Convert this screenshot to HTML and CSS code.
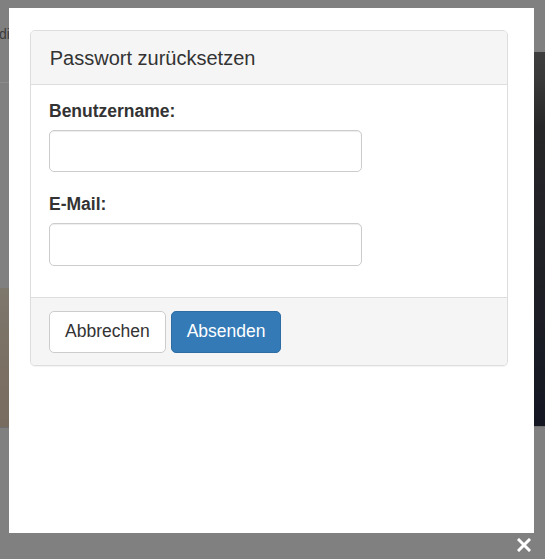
FILE: index.html
```html
<!DOCTYPE html>
<html lang="de">
<head>
<meta charset="utf-8">
<title>Passwort zurücksetzen</title>
<link rel="stylesheet" href="styles.css">
</head>
<body>
  <div class="page">
    <div class="page-left">
      <div class="site-header"><span class="crumb">die Studie</span></div>
      <div class="hero-left"></div>
    </div>
    <div class="page-right">
      <div class="hero-right"></div>
    </div>
  </div>

  <div class="lightbox">
    <div class="panel">
      <div class="panel-heading">
        <h3 class="panel-title">Passwort zurücksetzen</h3>
      </div>
      <form class="panel-body">
        <div class="form-group">
          <label class="form-label" for="username">Benutzername:</label>
          <input class="form-control" id="username" type="text">
        </div>
        <div class="form-group">
          <label class="form-label" for="email">E-Mail:</label>
          <input class="form-control" id="email" type="email">
        </div>
      </form>
      <div class="panel-footer">
        <button class="btn btn-default" type="button">Abbrechen</button>
        <button class="btn btn-primary" type="button">Absenden</button>
      </div>
    </div>
  </div>

  <button class="lightbox-close" type="button" aria-label="Schließen">
    <svg width="14" height="14" viewBox="0 0 14 14"><path d="M2 2L12 12M12 2L2 12" stroke="#fff" stroke-width="3" stroke-linecap="square"/></svg>
  </button>
</body>
</html>
```
FILE: styles.css
```css
* { box-sizing: border-box; }

html, body {
  margin: 0;
  height: 100%;
}

body {
  background: #808080;
  font-family: "Liberation Sans", Arial, sans-serif;
  color: #333;
  overflow: hidden;
}

/* dimmed page behind the lightbox */
.page {
  display: grid;
  grid-template-columns: 1fr 1fr;
  height: 100%;
}

.site-header {
  height: 83px;
  padding-top: 25px;
  border-bottom: 1px solid #8c8c8c;
}

.crumb {
  font-size: 14px;
  color: #3c3c3c;
  margin-left: -1px;
}

.hero-left {
  margin-top: 205px;
  height: 140px;
  background: linear-gradient(180deg, #7e776c 0%, #7a6f62 60%, #776c5f 100%);
  border-bottom: 1px solid #6e6e6e;
}

.page-right {
  padding-top: 52px;
}

.hero-right {
  height: 375px;
  background: linear-gradient(180deg, #3e3e3e 0%, #383838 8%, #262628 20%, #1f2026 60%, #141722 100%);
  border-bottom: 1px solid #707070;
}

/* lightbox */
.lightbox {
  position: fixed;
  left: 9px;
  top: 8px;
  width: 525px;
  height: 525px;
  background: #fff;
  padding: 22px 26px 0 21px;
}

.panel {
  border: 1px solid #ddd;
  border-radius: 5px;
  background: #fff;
  box-shadow: 0 1px 1px rgba(0, 0, 0, 0.05);
}

.panel-heading {
  background: #f5f5f5;
  border-bottom: 1px solid #ddd;
  padding: 12.5px 18.75px;
  border-radius: 4px 4px 0 0;
}

.panel-title {
  margin: 0;
  font-size: 20px;
  line-height: 28px;
  font-weight: normal;
  color: #333;
}

.panel-body {
  margin: 0;
  padding: 13.5px 18px 11.5px;
}

.form-group {
  margin-bottom: 19.75px;
}

.form-label {
  display: block;
  font-size: 17.5px;
  line-height: 25px;
  font-weight: bold;
  margin-bottom: 6.25px;
  color: #333;
}

.form-control {
  display: block;
  width: 313px;
  height: 42.5px;
  padding: 7.5px 15px;
  font-family: inherit;
  font-size: 17.5px;
  color: #555;
  background: #fff;
  border: 1px solid #ccc;
  border-radius: 5px;
  box-shadow: inset 0 1px 1px rgba(0, 0, 0, 0.075);
}

.panel-footer {
  background: #f5f5f5;
  border-top: 1px solid #ddd;
  padding: 12.5px 18px;
  border-radius: 0 0 4px 4px;
  display: flex;
  gap: 5px;
}

.btn {
  font-family: inherit;
  font-size: 17.5px;
  line-height: 25px;
  padding: 7.5px 15px;
  border: 1px solid transparent;
  border-radius: 5px;
  cursor: pointer;
}

.btn-default {
  background: #fff;
  border-color: #ccc;
  color: #333;
}

.btn-primary {
  background: #337ab7;
  border-color: #2e6da4;
  color: #fff;
}

.lightbox-close {
  position: fixed;
  right: 14px;
  bottom: 7px;
  width: 14px;
  height: 14px;
  padding: 0;
  border: 0;
  background: none;
  display: flex;
}
```
